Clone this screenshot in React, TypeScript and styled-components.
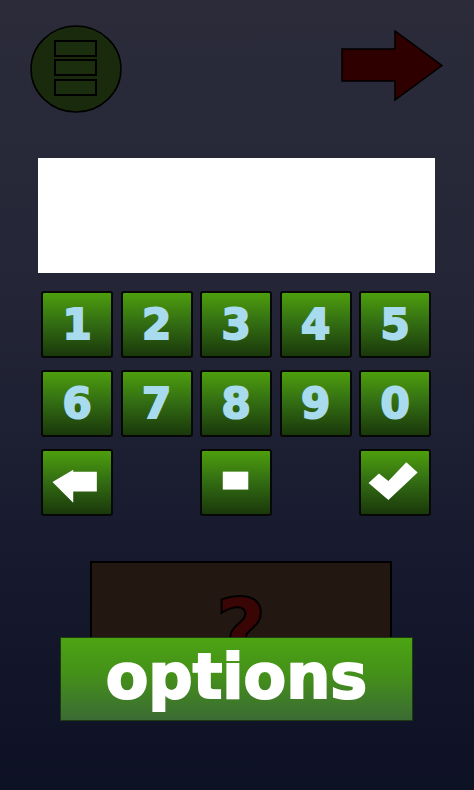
import React from "react";
import styled, { createGlobalStyle } from "styled-components";

const GlobalStyle = createGlobalStyle`
  html, body {
    margin: 0;
    padding: 0;
    height: 100%;
  }
  body {
    background: #0d1124;
    font-family: "DejaVu Sans", "Liberation Sans", sans-serif;
  }
`;

const Screen = styled.div`
  width: 474px;
  height: 790px;
  box-sizing: border-box;
  background: linear-gradient(180deg, #2b2b3a 0%, #232536 40%, #171a2e 70%, #0d1124 100%);
  padding: 25px 38px 0 30px;
  overflow: hidden;
`;

const Header = styled.div`
  display: flex;
  justify-content: space-between;
  align-items: flex-start;
  height: 88px;
`;

const MenuButton = styled.svg`
  width: 92px;
  height: 88px;
  display: block;
`;

const NextButton = styled.svg`
  width: 104px;
  height: 72px;
  margin-top: 5px;
  margin-right: -9px;
  display: block;
`;

const Display = styled.div`
  margin: 45px 1px 0 8px;
  height: 115px;
  background: #ffffff;
`;

const Keypad = styled.div`
  display: grid;
  grid-template-columns: repeat(5, 72px);
  grid-auto-rows: 67px;
  column-gap: 7.5px;
  row-gap: 12px;
  margin: 18px 0 0 11px;
`;

const Key = styled.button<{ $col?: number }>`
  grid-column: ${(p) => (p.$col ? `${p.$col} / span 1` : "auto")};
  box-sizing: border-box;
  border: 2px solid #050805;
  border-radius: 3px;
  background: linear-gradient(180deg, #4d9e0d 0%, #347013 45%, #1a380b 100%);
  color: #a9dbee;
  font-family: "DejaVu Sans", "Liberation Sans", sans-serif;
  font-weight: 900;
  font-size: 42px;
  line-height: 1;
  padding: 0;
  display: flex;
  align-items: center;
  justify-content: center;
  cursor: pointer;
  -webkit-text-stroke: 2px #a9dbee;
`;

const KeyIcon = styled.svg`
  width: 72px;
  height: 67px;
  display: block;
`;

const Bottom = styled.div`
  margin: 45px 0 0 30px;
  display: flex;
  flex-direction: column;
  align-items: flex-start;
`;

const MysteryBox = styled.div`
  box-sizing: border-box;
  width: 302px;
  height: 92px;
  margin-left: 30px;
  border: 2px solid #000;
  background: #231711;
  display: flex;
  justify-content: center;
  overflow: hidden;
`;

const Question = styled.span`
  font-family: "DejaVu Sans", "Liberation Sans", sans-serif;
  font-weight: 900;
  font-size: 88px;
  line-height: 1;
  margin-top: 24px;
  color: #3a0505;
  -webkit-text-stroke: 2px #000;
`;

const OptionsButton = styled.button`
  box-sizing: border-box;
  width: 353px;
  height: 84px;
  margin-top: -16px;
  border: 1px solid #1d3a12;
  background: linear-gradient(180deg, #4ca412 0%, #44901a 45%, #3b6b34 100%);
  color: #ffffff;
  font-family: "DejaVu Sans", "Liberation Sans", sans-serif;
  font-weight: 900;
  font-size: 62px;
  padding: 0 0 6px;
  cursor: pointer;
  -webkit-text-stroke: 2px #fff;
`;

const digits = ["1", "2", "3", "4", "5", "6", "7", "8", "9", "0"];

export default function App() {
  return (
    <>
      <GlobalStyle />
      <Screen>
        <Header>
          <MenuButton viewBox="0 0 92 88">
            <ellipse cx="46" cy="44" rx="45" ry="43" fill="#1a2a0c" stroke="#000" strokeWidth="1.5" />
            <rect x="25" y="16" width="41" height="15" fill="#1b2e0d" stroke="#000" strokeWidth="2" />
            <rect x="25" y="35" width="41" height="15" fill="#1b2e0d" stroke="#000" strokeWidth="2" />
            <rect x="25" y="55" width="41" height="15" fill="#1b2e0d" stroke="#000" strokeWidth="2" />
          </MenuButton>
          <NextButton viewBox="0 0 104 72">
            <polygon
              points="1,19 54,19 54,1 101,35.5 54,70 54,51 1,51"
              fill="#2e0000"
              stroke="#000"
              strokeWidth="1.5"
            />
          </NextButton>
        </Header>

        <Display />

        <Keypad>
          {digits.map((d) => (
            <Key key={d}>{d}</Key>
          ))}
          <Key $col={1}>
            <KeyIcon viewBox="0 0 72 67">
              <polygon points="10,33 32,20 32,22 57,22 57,43 32,43 32,55" fill="#fff" />
            </KeyIcon>
          </Key>
          <Key $col={3}>
            <KeyIcon viewBox="0 0 72 67">
              <rect x="22" y="22" width="27" height="19" fill="#fff" />
            </KeyIcon>
          </Key>
          <Key $col={5}>
            <KeyIcon viewBox="0 0 72 67">
              <polygon points="8,34 19,24 29,32 48,12 60,23 29,52" fill="#fff" />
            </KeyIcon>
          </Key>
        </Keypad>

        <Bottom>
          <MysteryBox>
            <Question>?</Question>
          </MysteryBox>
          <OptionsButton>options</OptionsButton>
        </Bottom>
      </Screen>
    </>
  );
}
